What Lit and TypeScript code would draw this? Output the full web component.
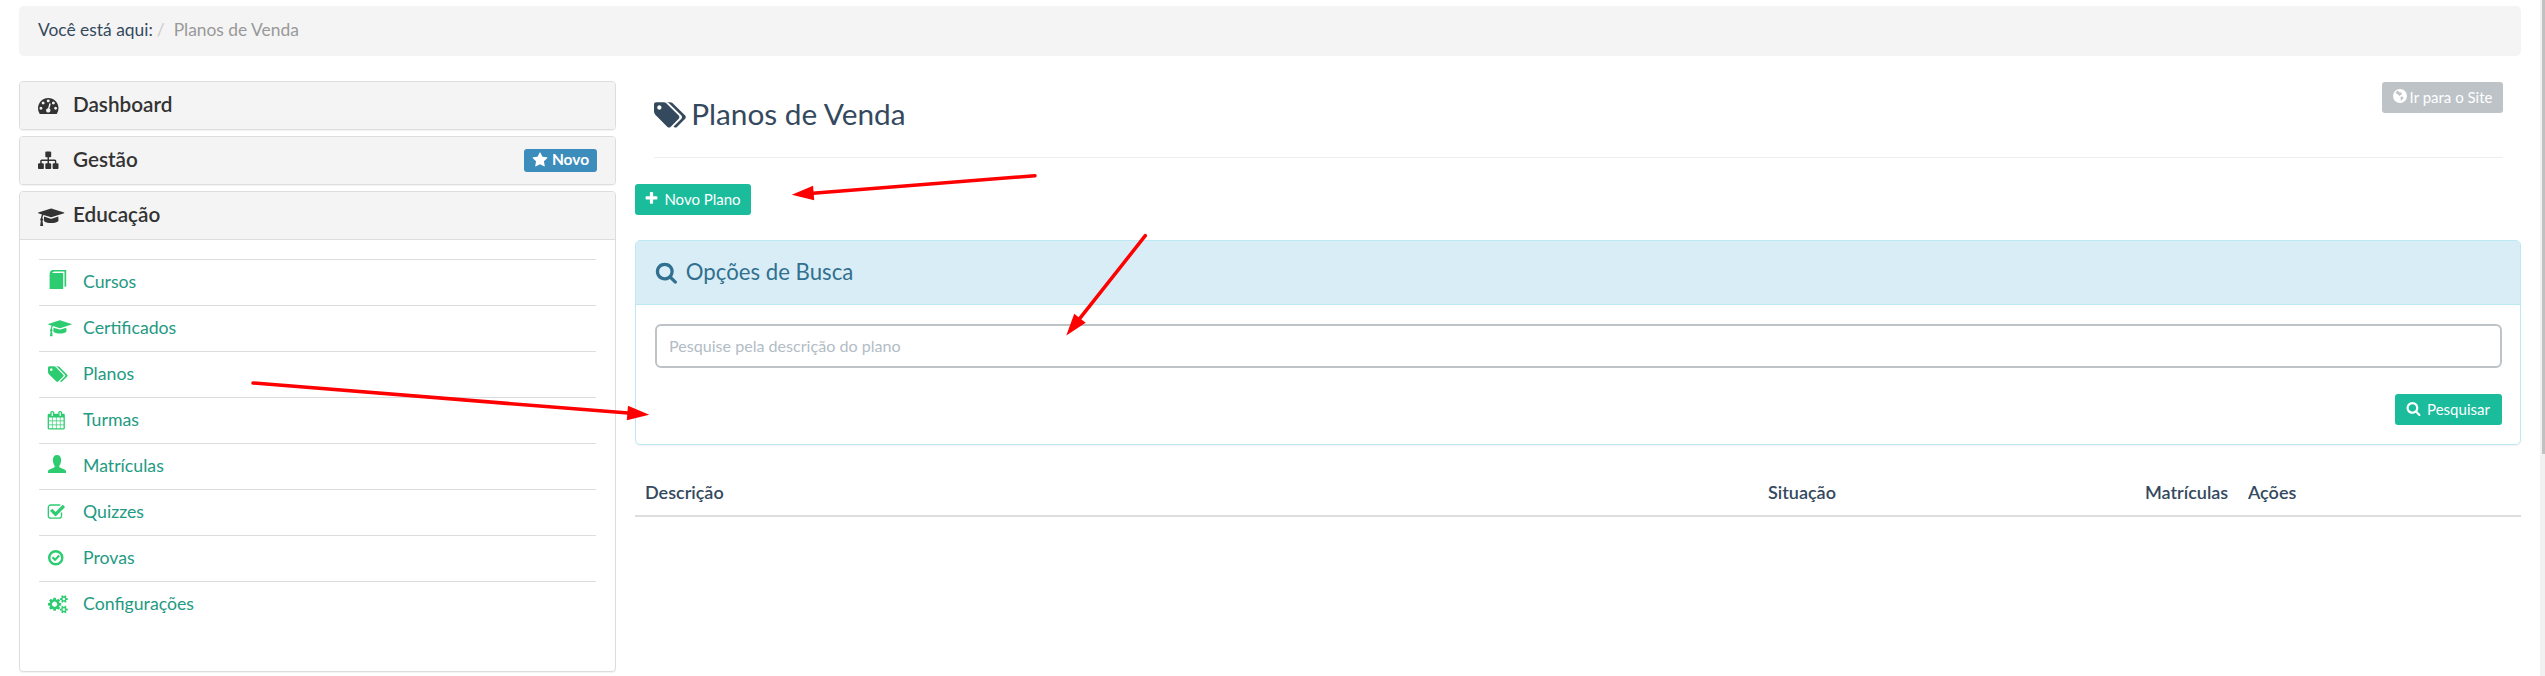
import { LitElement, html, css, svg } from "lit";
import { customElement, property } from "lit/decorators.js";

type Glyph = { w: number; h: number; d: string };

const SMALL_COG =
  "v140q0 16-149 31-12 27-30 52 51 113 51 138 0 4-4 7-122 71-124 71-8 0-46-47t-52-68q-20 2-30 2t-30-2q-14 21-52 68t-46 47q-2 0-124-71-4-3-4-7 0-25 51-138-18-25-30-52-149-15-149-31v-140q0-16 149-31 13-29 30-52-51-113-51-138 0-4 4-7 4-2 35-20t59-34 30-16q8 0 46 46.5t52 67.5q20-2 30-2t30 2q51-71 92-112l6-2q4 0 124 70 4 3 4 7 0 25-51 138 17 23 30 52 149 15 149 31z";

const GLYPHS: Record<string, Glyph> = {
  gauge: { w: 1792, h: 1792, d: "M384 1152q0-53-37.5-90.5t-90.5-37.5-90.5 37.5-37.5 90.5 37.5 90.5 90.5 37.5 90.5-37.5 37.5-90.5zm192-448q0-53-37.5-90.5t-90.5-37.5-90.5 37.5-37.5 90.5 37.5 90.5 90.5 37.5 90.5-37.5 37.5-90.5zm428 481l101-382q6-26-7.5-48.5t-38.5-29.5-48 6.5-30 39.5l-101 382q-60 5-107 43.5t-63 98.5q-20 77 20 146t117 89 146-20 89-117q16-60-6-117t-72-91zm660-33q0-53-37.5-90.5t-90.5-37.5-90.5 37.5-37.5 90.5 37.5 90.5 90.5 37.5 90.5-37.5 37.5-90.5zm-640-640q0-53-37.5-90.5t-90.5-37.5-90.5 37.5-37.5 90.5 37.5 90.5 90.5 37.5 90.5-37.5 37.5-90.5zm448 192q0-53-37.5-90.5t-90.5-37.5-90.5 37.5-37.5 90.5 37.5 90.5 90.5 37.5 90.5-37.5 37.5-90.5zm320 448q0 261-141 483-19 29-54 29h-1402q-35 0-54-29-141-221-141-483 0-182 71-348t191-286 286-191 348-71 348 71 286 191 191 286 71 348z" },
  sitemap: { w: 1792, h: 1792, d: "M1792 1248v320q0 40-28 68t-68 28h-320q-40 0-68-28t-28-68v-320q0-40 28-68t68-28h96v-192h-512v192h96q40 0 68 28t28 68v320q0 40-28 68t-68 28h-320q-40 0-68-28t-28-68v-320q0-40 28-68t68-28h96v-192h-512v192h96q40 0 68 28t28 68v320q0 40-28 68t-68 28h-320q-40 0-68-28t-28-68v-320q0-40 28-68t68-28h96v-192q0-52 38-90t90-38h512v-192h-96q-40 0-68-28t-28-68v-320q0-40 28-68t68-28h320q40 0 68 28t28 68v320q0 40-28 68t-68 28h-96v192h512q52 0 90 38t38 90v192h96q40 0 68 28t28 68z" },
  cap: { w: 2304, h: 1792, d: "M1774 836l18 316q4 69-82 128t-235 93.5-323 34.5-323-34.5-235-93.5-82-128l18-316 574 181q22 7 48 7t48-7zm530-324q0 23-22 31l-1120 352q-4 1-10 1t-10-1l-652-206q-43 34-71 111.5t-34 178.5q63 36 63 109 0 69-58 107l58 433q2 14-8 25-9 11-24 11h-192q-15 0-24-11-10-11-8-25l58-433q-58-38-58-107 0-73 65-111 11-207 98-330l-333-104q-22-8-22-31t22-31l1120-352q4-1 10-1t10 1l1120 352q22 8 22 31z" },
  tags: { w: 1920, h: 1792, d: "M448 448q0-53-37.5-90.5t-90.5-37.5-90.5 37.5-37.5 90.5 37.5 90.5 90.5 37.5 90.5-37.5 37.5-90.5zm1067 576q0 53-37 90l-491 492q-39 37-91 37-53 0-90-37l-715-716q-38-37-64.5-101t-26.5-117v-416q0-52 38-90t90-38h416q53 0 117 26.5t102 64.5l715 714q37 39 37 91zm384 0q0 53-37 90l-491 492q-39 37-91 37-36 0-59-14t-53-45l470-470q37-37 37-90 0-52-37-91l-715-714q-38-38-102-64.5t-117-26.5h224q53 0 117 26.5t102 64.5l715 714q37 39 37 91z" },
  calendar: { w: 1792, h: 1792, d: "M192 1664h288v-288h-288v288zm352 0h320v-288h-320v288zm-352-352h288v-320h-288v320zm352 0h320v-320h-320v320zm-352-384h288v-288h-288v288zm736 736h320v-288h-320v288zm-384-736h320v-288h-320v288zm768 736h288v-288h-288v288zm-384-352h320v-320h-320v320zm-352-864v-288q0-13-9.5-22.5t-22.5-9.5h-64q-13 0-22.5 9.5t-9.5 22.5v288q0 13 9.5 22.5t22.5 9.5h64q13 0 22.5-9.5t9.5-22.5zm736 864h288v-320h-288v320zm-384-384h320v-288h-320v288zm384 0h288v-288h-288v288zm32-480v-288q0-13-9.5-22.5t-22.5-9.5h-64q-13 0-22.5 9.5t-9.5 22.5v288q0 13 9.5 22.5t22.5 9.5h64q13 0 22.5-9.5t9.5-22.5zm384-64v1280q0 52-38 90t-90 38h-1408q-52 0-90-38t-38-90v-1280q0-52 38-90t90-38h128v-96q0-66 47-113t113-47h64q66 0 113 47t47 113v96h384v-96q0-66 47-113t113-47h64q66 0 113 47t47 113v96h128q52 0 90 38t38 90z" },
  check: { w: 1792, h: 1792, d: "M1472 930v318q0 119-84.5 203.5t-203.5 84.5h-832q-119 0-203.5-84.5t-84.5-203.5v-832q0-119 84.5-203.5t203.5-84.5h832q63 0 117 25 15 7 18 23 3 17-9 29l-49 49q-10 10-23 10-3 0-9-2-23-6-45-6h-832q-66 0-113 47t-47 113v832q0 66 47 113t113 47h832q66 0 113-47t47-113v-254q0-13 9-22l64-64q10-10 23-10 6 0 12 3 20 8 20 29zm231-489l-814 814q-24 24-57 24t-57-24l-430-430q-24-24-24-57t24-57l110-110q24-24 57-24t57 24l263 263 647-647q24-24 57-24t57 24l110 110q24 24 24 57t-24 57z" },
  cogs: { w: 1920, h: 1792, d: "M896 896q0-106-75-181t-181-75-181 75-75 181 75 181 181 75 181-75 75-181zm768 512q0-52-38-90t-90-38-90 38-38 90q0 53 37.5 90.5t90.5 37.5 90.5-37.5 37.5-90.5zm0-1024q0-52-38-90t-90-38-90 38-38 90q0 53 37.5 90.5t90.5 37.5 90.5-37.5 37.5-90.5zm-384 421v185q0 10-7 19.5t-16 10.5l-155 24q-11 35-32 76 34 48 90 115 7 11 7 20 0 12-7 19-23 30-82.5 89.5t-78.5 59.5q-11 0-21-7l-115-90q-37 19-77 31-11 108-23 155-7 24-30 24h-186q-11 0-20-7.5t-10-17.5l-23-153q-34-10-75-31l-118 89q-7 7-20 7-11 0-21-8-144-133-144-160 0-9 7-19 10-14 41-53t47-61q-23-44-35-82l-152-24q-10-1-17-9.5t-7-19.5v-185q0-10 7-19.5t16-10.5l155-24q11-35 32-76-34-48-90-115-7-11-7-20 0-12 7-20 22-30 82-89t79-59q11 0 21 7l115 90q34-18 77-32 11-108 23-154 7-24 30-24h186q11 0 20 7.5t10 17.5l23 153q34 10 75 31l118-89q8-7 20-7 11 0 21 8 144 133 144 160 0 8-7 19-12 16-42 54t-45 60q23 48 34 82l152 23q10 2 17 10.5t7 19.5zM1920 1338" + SMALL_COG + "M1920 314" + SMALL_COG },
  search: { w: 1792, h: 1792, d: "M1216 832q0-185-131.5-316.5t-316.5-131.5-316.5 131.5-131.5 316.5 131.5 316.5 316.5 131.5 316.5-131.5 131.5-316.5zm512 832q0 52-38 90t-90 38q-54 0-90-38l-343-342q-179 124-399 124-143 0-273.5-55.5t-225-150-150-225-55.5-273.5 55.5-273.5 150-225 225-150 273.5-55.5 273.5 55.5 225 150 150 225 55.5 273.5q0 220-124 399l343 343q37 37 37 90z" },
  plus: { w: 1792, h: 1792, d: "M1600 736v192q0 40-28 68t-68 28h-416v416q0 40-28 68t-68 28h-192q-40 0-68-28t-28-68v-416h-416q-40 0-68-28t-28-68v-192q0-40 28-68t68-28h416v-416q0-40 28-68t68-28h192q40 0 68 28t28 68v416h416q40 0 68 28t28 68z" },
  star: { w: 1792, h: 1792, d: "M1728 647q0 22-26 48l-363 354 86 500q1 7 1 20 0 21-10.5 35.5t-30.5 14.5q-19 0-40-12l-449-236-449 236q-22 12-40 12-21 0-31.5-14.5t-10.5-35.5q0-6 2-20l86-500-364-354q-25-27-25-48 0-37 56-46l502-73 225-455q19-41 49-41t49 41l225 455 502 73q56 9 56 46z" },
  book: { w: 18, h: 19, d: "M3 0h14.2v16.4l-1.7.4V1.6H5L2.8 3h11.4v16H.6V3.2Q.6 1.6 3 0z" },
  user: { w: 18, h: 18, d: "M9 0c2.9 0 4.100 2 4.100 5 0 2.200-.6 4.300-1.600 5.400-.4.500-.3 1.700.4 2.100l4.600 2c1 .5 1.500 1 1.500 2V18H0v-1.500c0-1 .5-1.500 1.500-2l4.600-2c.7-.4.800-1.600.4-2.100C5.500 9.300 4.900 7.200 4.900 5c0-3 1.200-5 4.100-5z" },
  okcircle: { w: 16, h: 16, d: "M8 0a8 8 0 1 1 0 16A8 8 0 0 1 8 0zM8 2.500a5.500 5.500 0 1 0 0 11a5.500 5.500 0 0 0 0-11zM3.800 8.200l1.600-1.600 1.900 1.900 3.500-3.600 1.600 1.600-5.100 5.200z" },
  globe: { w: 14, h: 14, d: "M7 0a7 7 0 1 1 0 14A7 7 0 0 1 7 0zM3.400 2.500l-.4 1.300.8 1.300 1.500.4.800 1.200.8.500.5-1.300 1-.2.500-1.200-.9-1.200-1.200.4-.9-1.100-1.100-.8zM8.200 7.400l2.100.7-.1 1.300-1.400 1.400-.7 1-.6-1.400.3-1.300-.4-.8z" },
};

@customElement("ui-icon")
class UiIcon extends LitElement {
  @property() name = "";

  static styles = css`
    :host { display: inline-flex; flex: none; height: 1em; }
    .glyph { display: block; height: 100%; width: auto; fill: currentColor; fill-rule: evenodd; overflow: visible; }
  `;

  render() {
    const g = GLYPHS[this.name];
    return g ? html`<svg class="glyph" viewBox="0 0 ${g.w} ${g.h}">${svg`<path d=${g.d}></path>`}</svg>` : null;
  }
}

@customElement("side-menu")
class SideMenu extends LitElement {
  static styles = css`
    :host { display: flex; flex-direction: column; gap: 6px; width: 597px; flex: none; }
    .panel { box-sizing: border-box; border: 1px solid #ddd; border-radius: 4px; background: #fff; box-shadow: 0 1px 1px rgba(0, 0, 0, 0.05); overflow: hidden; }
    .head { box-sizing: border-box; height: 47px; padding: 0 18px; display: flex; align-items: center; background: #f4f4f4; color: #333; font-size: 20.7px; font-weight: 600; }
    .head.open { height: 48px; border-bottom: 1px solid #ddd; }
    .slot { width: 35px; flex: none; display: flex; align-items: center; font-size: 20.500px; }
    .slot.wide { padding-top: 3px; }
    .label { flex: 1; line-height: 24px; padding-bottom: 3px; }
    .tag { box-sizing: border-box; width: 73px; height: 23px; display: flex; align-items: center; justify-content: center; gap: 4px; border-radius: 3px; background: #3c8dbc; color: #fff; font-size: 15.5px; font-weight: 700; line-height: 20px; padding-bottom: 1px; }
    .tag ui-icon { font-size: 16px; }
    .tag span { padding-bottom: 2px; }
    .body { padding: 19px 19px 44px; }
    .item { box-sizing: border-box; height: 46px; border-top: 1px solid #ddd; padding: 0 9px; display: flex; align-items: center; color: #239a82; font-size: 17.7px; line-height: 24px; }
    .text { padding-bottom: 2px; }
    .mark { width: 35px; height: 22px; flex: none; display: flex; align-items: center; color: #2ecc71; }
    .i-book { font-size: 19px; padding: 0 0 6px 1px; }
    .i-cap { font-size: 18.500px; }
    .i-tags { font-size: 18.500px; }
    .i-calendar { font-size: 18.500px; margin-left: -0.7px; padding-bottom: 1px; }
    .i-user { font-size: 18px; padding-bottom: 5px; }
    .i-check { font-size: 18.500px; margin-left: -0.7px; }
    .i-okcircle { font-size: 15.500px; padding-bottom: 1px; }
    .i-cogs { font-size: 18.500px; padding-bottom: 1px; }
  `;

  private items = [
    ["book", "Cursos"],
    ["cap", "Certificados"],
    ["tags", "Planos"],
    ["calendar", "Turmas"],
    ["user", "Matrículas"],
    ["check", "Quizzes"],
    ["okcircle", "Provas"],
    ["cogs", "Configurações"],
  ];

  render() {
    return html`
      <div class="panel"><div class="head"><span class="slot"><ui-icon name="gauge"></ui-icon></span><span class="label">Dashboard</span></div></div>
      <div class="panel"><div class="head"><span class="slot"><ui-icon name="sitemap"></ui-icon></span><span class="label">Gestão</span><span class="tag"><ui-icon name="star"></ui-icon><span>Novo</span></span></div></div>
      <div class="panel">
        <div class="head open"><span class="slot wide"><ui-icon name="cap"></ui-icon></span><span class="label">Educação</span></div>
        <div class="body">
          ${this.items.map(([icon, label]) => html`<div class="item"><span class="mark"><ui-icon class="i-${icon}" name=${icon}></ui-icon></span><span class="text">${label}</span></div>`)}
        </div>
      </div>
    `;
  }
}

type Arrow = { x1: number; y1: number; x2: number; y2: number };

@customElement("pointer-arrows")
class PointerArrows extends LitElement {
  static styles = css`
    :host { position: absolute; inset: 0; pointer-events: none; }
    .canvas { display: block; width: 2545px; height: 676px; }
    .shaft { stroke: #f00; stroke-width: 3.5; stroke-linecap: round; }
    .tip { fill: #f00; }
  `;

  private arrows: Arrow[] = [
    { x1: 253, y1: 383, x2: 649.3, y2: 414.8 },
    { x1: 1035, y1: 175.7, x2: 791.7, y2: 194.8 },
    { x1: 1145.3, y1: 235.7, x2: 1066.3, y2: 335.5 },
  ];

  render() {
    return html`<svg class="canvas" viewBox="0 0 2545 676">
      ${this.arrows.map(({ x1, y1, x2, y2 }) => {
        const len = Math.hypot(x2 - x1, y2 - y1);
        const angle = (Math.atan2(y2 - y1, x2 - x1) * 180) / Math.PI;
        return svg`<g transform="translate(${x1} ${y1}) rotate(${angle})">
          <line class="shaft" x1="0" y1="0" x2=${len - 18} y2="0"></line>
          <path class="tip" d="M${len} 0l-22 -7.3v14.6z"></path>
        </g>`;
      })}
    </svg>`;
  }
}

@customElement("app-root")
class AppRoot extends LitElement {
  static styles = css`
    :host { display: flex; position: relative; width: 2545px; height: 676px; overflow: hidden; background: #fff; color: #34495e; font-family: Lato, sans-serif; font-size: 18px; }
    .page { flex: 1; padding: 6px 19px 0 19px; min-width: 0; }
    .crumbs { box-sizing: border-box; height: 50px; border-radius: 5px; background: #f4f4f4; padding: 0 19px 2px; display: flex; align-items: center; font-size: 17.4px; line-height: 24px; }
    .sep { color: #ccc; padding: 0 9px 0 4px; }
    .here { color: #999; }
    .columns { display: flex; gap: 19px; margin-top: 25px; }
    .main { flex: 1; min-width: 0; }
    .top { box-sizing: border-box; height: 77px; margin: 0 18px 0 19px; border-bottom: 1px solid #eee; display: flex; justify-content: space-between; align-items: flex-start; }
    .title { margin: 0; padding-top: 15px; display: flex; align-items: center; font-size: 29.8px; font-weight: 400; line-height: 36px; gap: 5px; }
    .title ui-icon { font-size: 30px; padding-top: 2px; }
    .btn { box-sizing: border-box; height: 31px; display: inline-flex; align-items: center; justify-content: center; border-radius: 3px; background: #1abc9c; color: #fff; font-size: 15px; line-height: 20px; padding-bottom: 2px; }
    .btn ui-icon { font-size: 15px; }
    .site { width: 121px; margin-top: 1px; background: #bdc3c7; gap: 3px; }
    .site ui-icon { font-size: 14px; padding-bottom: 1px; }
    .add { width: 116px; gap: 5px; margin-top: 26px; padding-right: 1px; }
    .find { width: 107px; gap: 6px; padding-right: 1px; }
    .box { box-sizing: border-box; height: 205px; margin-top: 25px; border: 1px solid #bce8f1; border-radius: 5px; overflow: hidden; box-shadow: 0 1px 1px rgba(0, 0, 0, 0.05); }
    .box-head { box-sizing: border-box; height: 64px; border-bottom: 1px solid #bce8f1; background: #d9edf7; color: #31708f; padding: 0 18.5px; display: flex; align-items: center; gap: 8.500px; font-size: 22.2px; line-height: 28px; }
    .box-head ui-icon { font-size: 22.800px; }
    .box-head span { padding-bottom: 2px; }
    .box-body { padding: 19px 18px 0 19px; display: flex; flex-direction: column; align-items: flex-end; gap: 26px; }
    .field { box-sizing: border-box; width: 100%; height: 44px; border: 2px solid #bdc3c7; border-radius: 6px; padding: 0 12px 2px; font: 400 16.1px/24px Lato, sans-serif; color: #34495e; background: #fff; }
    .field::placeholder { color: #b2bcc5; opacity: 1; }
    .grid { display: grid; grid-template-columns: 1123px 377px 103px 1fr; margin-top: 28px; height: 44px; box-sizing: border-box; border-bottom: 2px solid #ddd; padding-left: 10px; align-items: center; font-weight: 600; font-size: 18px; line-height: 24px; padding-bottom: 5px; }
    .track { width: 5px; flex: none; background: #f1f1f1; display: flex; justify-content: flex-end; }
    .thumb { width: 3px; height: 454px; background: #c1c1c1; }
  `;

  render() {
    return html`
      <div class="page">
        <nav class="crumbs"><span>Você está aqui:</span><span class="sep">/</span><span class="here">Planos de Venda</span></nav>
        <div class="columns">
          <side-menu></side-menu>
          <main class="main">
            <div class="top">
              <h1 class="title"><ui-icon name="tags"></ui-icon><span>Planos de Venda</span></h1>
              <span class="btn site"><ui-icon name="globe"></ui-icon>Ir para o Site</span>
            </div>
            <span class="btn add"><ui-icon name="plus"></ui-icon>Novo Plano</span>
            <section class="box">
              <div class="box-head"><ui-icon name="search"></ui-icon><span>Opções de Busca</span></div>
              <div class="box-body">
                <input class="field" placeholder="Pesquise pela descrição do plano" />
                <span class="btn find"><ui-icon name="search"></ui-icon>Pesquisar</span>
              </div>
            </section>
            <div class="grid"><span>Descrição</span><span>Situação</span><span>Matrículas</span><span>Ações</span></div>
          </main>
        </div>
      </div>
      <div class="track"><div class="thumb"></div></div>
      <pointer-arrows></pointer-arrows>
    `;
  }
}
